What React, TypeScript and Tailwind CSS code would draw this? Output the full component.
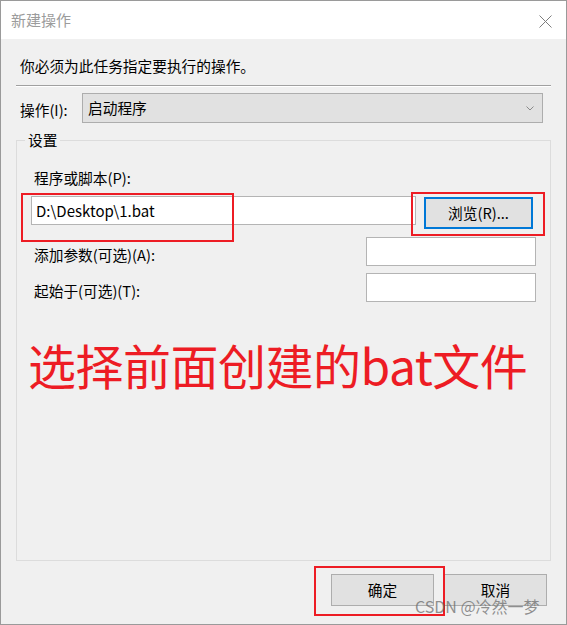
const ui = { fontFamily: '"Noto Sans CJK SC", "Noto Sans", sans-serif' };

export default function App() {
  return (
    <div
      style={ui}
      className="relative w-[567px] h-[625px] bg-[#f0f0f0] border border-[#9a9a9a] text-[14.7px] leading-[20px] text-black overflow-hidden"
    >
      {/* title bar */}
      <div className="h-[38px] bg-white flex items-center justify-between pl-[10px] pr-[14px]">
        <span className="text-[15px] text-[#9c9c9c]">新建操作</span>
        <svg width="13" height="13" viewBox="0 0 13 13" className="mt-[2px]">
          <path d="M0.5 0.5L12.5 12.5M12.5 0.5L0.5 12.5" stroke="#7d7d7d" strokeWidth="1" fill="none" />
        </svg>
      </div>

      <div className="pl-[15px]">
        <div className="pt-[17px] pl-[4px]">你必须为此任务指定要执行的操作。</div>
        <div className="mt-[9px] w-[535px] border-t border-[#a0a0a0] border-b border-b-white" />

        <div className="mt-[6px] flex items-center w-[535px]">
          <div className="w-[66px] pl-[4px] pt-[4px]">操作(I):</div>
          <div className="w-[461px] h-[30px] bg-[#e1e1e1] border border-[#adadad] flex items-center justify-between pl-[5px] pr-[8px]">
            <span>启动程序</span>
            <svg width="8" height="5" viewBox="0 0 8 5">
              <path d="M0.5 0.5L4 4L7.5 0.5" stroke="#8a8a8a" strokeWidth="1" fill="none" />
            </svg>
          </div>
        </div>

        {/* group box */}
        <div className="relative mt-[17px] w-[535px] h-[421px] border border-[#dcdcdc]">
          <span className="absolute -top-[11px] left-[8px] px-[3px] bg-[#f0f0f0]">设置</span>

          <div className="pt-[27px] pl-[17px]">程序或脚本(P):</div>

          <div className="mt-[8px] flex items-start pl-[14px]">
            <div className="w-[385px] h-[29px] bg-white border border-[#b4b4b4] flex items-center pl-[4px] text-[15px]">
              D:\Desktop\1.bat
            </div>
            <button className="ml-[8px] mt-[1px] w-[109px] h-[32px] bg-[#e1e1e1] border-2 border-[#0078d7] flex items-center justify-center">
              浏览(R)...
            </button>
          </div>

          <div className="mt-[8px] flex items-start">
            <div className="w-[349px] pl-[17px] mt-[8px]">添加参数(可选)(A):</div>
            <div className="w-[170px] h-[29px] bg-white border border-[#b4b4b4]" />
          </div>

          <div className="mt-[7px] flex items-start">
            <div className="w-[349px] pl-[17px] mt-[8px]">起始于(可选)(T):</div>
            <div className="w-[170px] h-[29px] bg-white border border-[#b4b4b4]" />
          </div>

          <div className="mt-[34px] pl-[11px] text-[48px] leading-[56px] tracking-[-0.5px] text-[#ed1c24] whitespace-nowrap">
            选择前面创建的bat文件
          </div>
        </div>

        <div className="mt-[13px] flex justify-end gap-[10px] pr-[19px]">
          <button className="w-[103px] h-[32px] bg-[#e1e1e1] border border-[#adadad]">确定</button>
          <button className="w-[103px] h-[32px] bg-[#e1e1e1] border border-[#adadad]">取消</button>
        </div>
      </div>

      {/* red annotation boxes */}
      <div className="absolute left-[20px] top-[192px] w-[213px] h-[49px] border-2 border-[#ed1c24]" />
      <div className="absolute left-[410px] top-[191px] w-[134px] h-[44px] border-2 border-[#ed1c24]" />
      <div className="absolute left-[313px] top-[565px] w-[131px] h-[50px] border-2 border-[#ed1c24]" />

      <div className="absolute left-[414px] top-[594px] text-[16px] leading-[22px] text-[rgba(110,110,110,0.75)] whitespace-nowrap">
        CSDN @冷然一梦
      </div>
    </div>
  );
}
